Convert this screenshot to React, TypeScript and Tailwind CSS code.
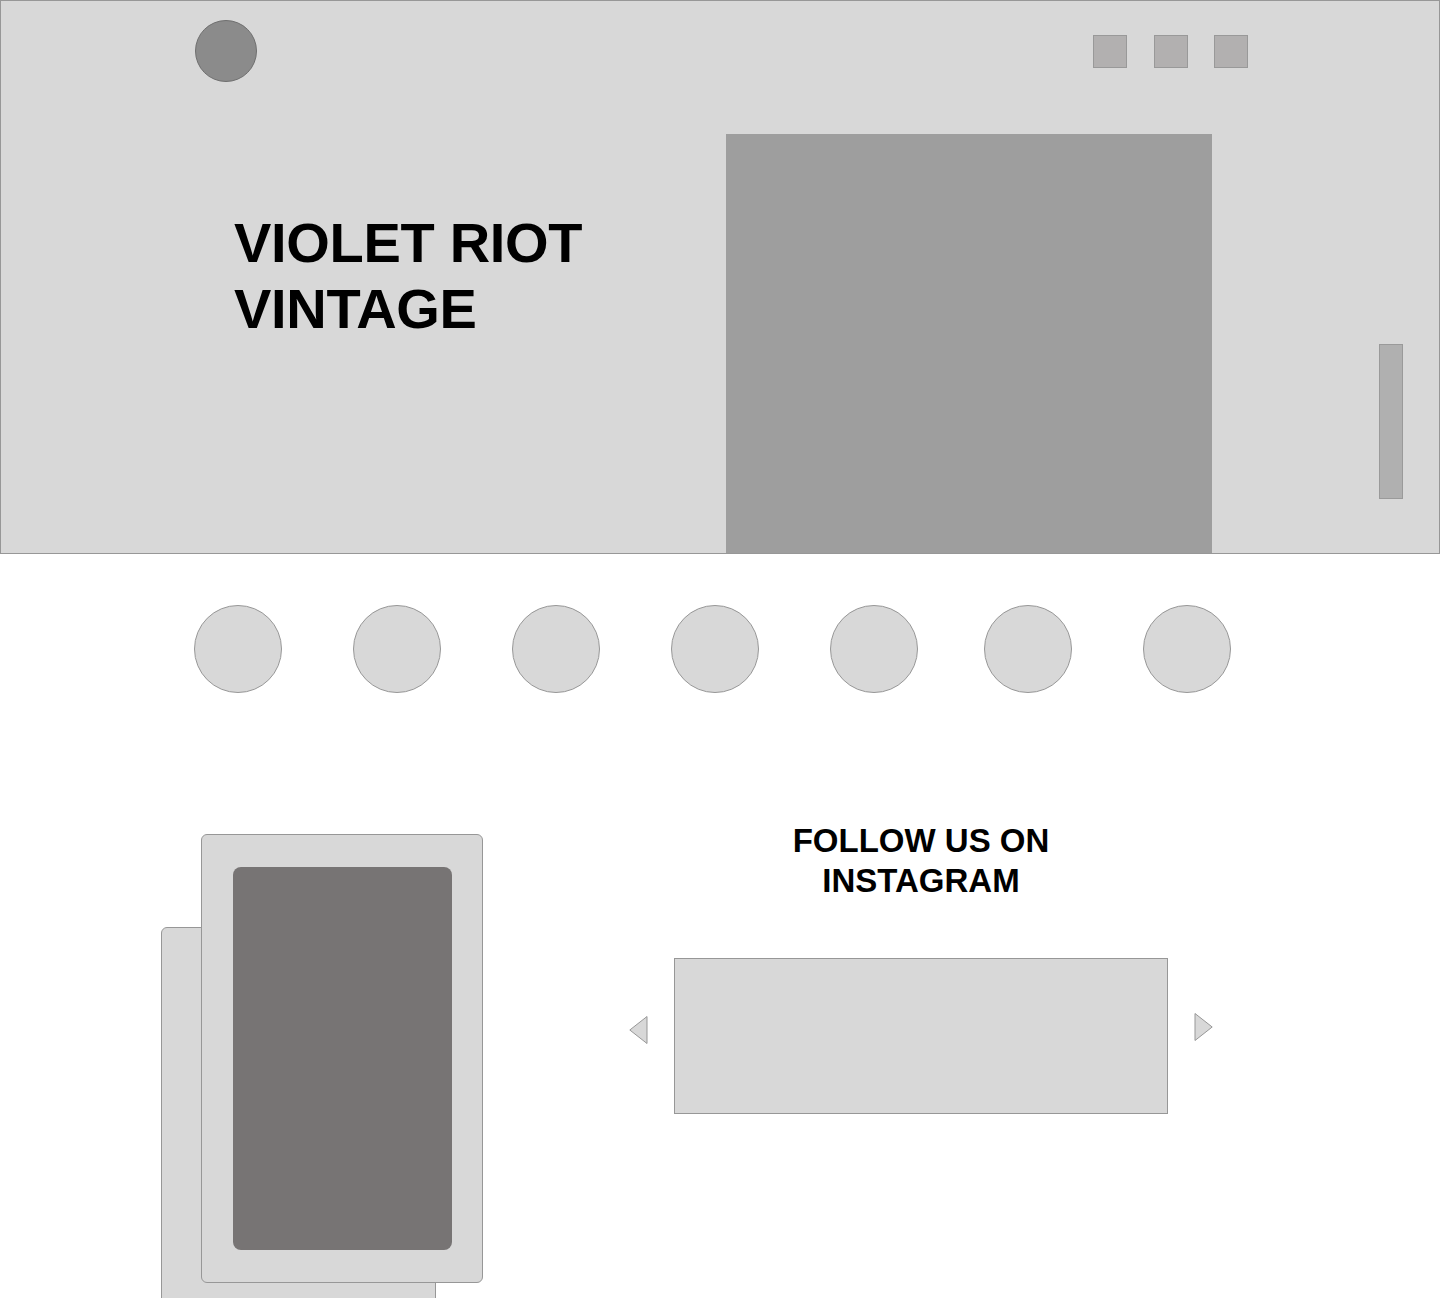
const circles = [0, 1, 2, 3, 4, 5, 6];

function Hero() {
  return (
    <div className="h-[554px] border border-[#979797] bg-[#d8d8d8] flex flex-col overflow-hidden">
      {/* top bar: logo + three icon squares */}
      <div className="flex items-start justify-between pt-[19px] pl-[194px] pr-[191px]">
        <div className="w-[62px] h-[62px] rounded-full bg-[#8b8b8b] border border-[#6f6f6f]" />
        <div className="flex gap-[26px] mt-[15px]">
          <div className="w-[34px] h-[33px] mr-[1px] bg-[#b2b0b0] border border-[#999999]" />
          <div className="w-[34px] h-[33px] bg-[#b2b0b0] border border-[#999999]" />
          <div className="w-[34px] h-[33px] bg-[#b2b0b0] border border-[#999999]" />
        </div>
      </div>

      <div className="flex flex-1 pl-[233px]">
        <div className="w-[492px] pt-[128px]">
          <h1 className="text-[56px] leading-[66px] font-bold tracking-[-0.3px] text-black">
            VIOLET RIOT
            <br />
            VINTAGE
          </h1>
        </div>
        <div className="w-[486px] mt-[52px] bg-[#9e9e9e]" />
        <div className="ml-[167px] mt-[262px] w-[24px] h-[155px] bg-[#b0b0b0] border border-[#9a9a9a]" />
      </div>
    </div>
  );
}

function CategoryRow() {
  return (
    <div className="flex pl-[194px] mt-[51px]">
      {circles.map((i) => (
        <div
          key={i}
          className={`w-[88px] h-[88px] rounded-full bg-[#d8d8d8] border border-[#979797] ${
            i === 0 ? "" : i === 5 ? "ml-[66px]" : "ml-[71px]"
          }`}
        />
      ))}
    </div>
  );
}

function PhoneMockup() {
  return (
    <div className="relative w-[322px] h-[500px] mt-[14px]">
      <div className="absolute left-0 top-[93px] w-[275px] h-[420px] rounded-t-[6px] bg-[#d8d8d8] border border-[#979797]" />
      <div className="relative ml-[40px] w-[282px] h-[449px] rounded-[6px] bg-[#d8d8d8] border border-[#979797] pt-[32px] pl-[31px]">
        <div className="w-[219px] h-[383px] rounded-[8px] bg-[#777474]" />
      </div>
    </div>
  );
}

function InstagramFeed() {
  return (
    <div className="ml-[146px] w-[584px] pt-[1px]">
      <h2 className="text-center text-[33px] leading-[40px] font-bold text-black">
        FOLLOW US ON
        <br />
        INSTAGRAM
      </h2>
      <div className="flex items-start mt-[57px]">
        <svg className="mt-[58px]" width="19" height="28" viewBox="0 0 19 28">
          <polygon points="18,0.5 0.8,14 18,27.5" fill="#d8d8d8" stroke="#979797" strokeWidth="1" />
        </svg>
        <div className="ml-[26px] w-[494px] h-[156px] bg-[#d8d8d8] border border-[#979797]" />
        <svg className="ml-[26px] mt-[55px]" width="19" height="28" viewBox="0 0 19 28">
          <polygon points="1,0.5 18.2,14 1,27.5" fill="#d8d8d8" stroke="#979797" strokeWidth="1" />
        </svg>
      </div>
    </div>
  );
}

export default function App() {
  return (
    <div className="w-full h-[1298px] overflow-hidden bg-white font-['Liberation_Sans',Arial,sans-serif]">
      <Hero />
      <CategoryRow />
      <div className="flex items-start pl-[161px] mt-[127px]">
        <PhoneMockup />
        <InstagramFeed />
      </div>
    </div>
  );
}
